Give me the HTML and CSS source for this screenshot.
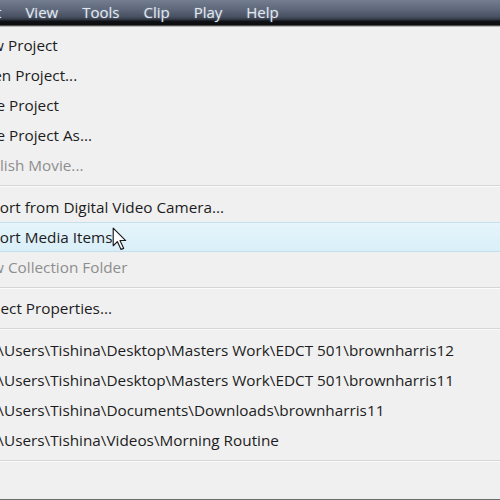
FILE: index.html
```html
<!DOCTYPE html>
<html>
<head>
<meta charset="utf-8">
<link rel="stylesheet" href="styles.css">
</head>
<body>
<div class="screen">
  <div class="menubar">
    <div class="menubar-items">
      <span class="mb-item">File</span>
      <span class="mb-item">Edit</span>
      <span class="mb-item">View</span>
      <span class="mb-item">Tools</span>
      <span class="mb-item">Clip</span>
      <span class="mb-item">Play</span>
      <span class="mb-item">Help</span>
    </div>
  </div>
  <div class="menu">
    <div class="menu-list">
      <div class="item"><span class="label">New Project</span></div>
      <div class="item"><span class="label">Open Project...</span></div>
      <div class="item"><span class="label">Save Project</span></div>
      <div class="item"><span class="label">Save Project As...</span></div>
      <div class="item disabled"><span class="label">Publish Movie...</span></div>
      <div class="sep"></div>
      <div class="item"><span class="label">Import from Digital Video Camera...</span></div>
      <div class="item hover"><span class="label">Import Media Items</span></div>
      <div class="item disabled"><span class="label">New Collection Folder</span></div>
      <div class="sep sep-narrow"></div>
      <div class="item"><span class="label">Project Properties...</span></div>
      <div class="sep"></div>
      <div class="item"><span class="label">1 C:\Users\Tishina\Desktop\Masters Work\EDCT 501\brownharris12</span></div>
      <div class="item"><span class="label">2 C:\Users\Tishina\Desktop\Masters Work\EDCT 501\brownharris11</span></div>
      <div class="item"><span class="label">3 C:\Users\Tishina\Documents\Downloads\brownharris11</span></div>
      <div class="item"><span class="label">4 C:\Users\Tishina\Videos\Morning Routine</span></div>
      <div class="sep"></div>
      <div class="item"><span class="label">Exit</span></div>
    </div>
    <svg class="cursor" width="17" height="25" viewBox="0 0 16 24">
      <path d="M1 1 L1 18 L5 14 L8.5 21.5 L11 20.5 L7.5 13 L13 13 Z" fill="#ffffff" stroke="#1a1a1a" stroke-width="1.1" stroke-linejoin="round"/>
    </svg>
  </div>
</div>
</body>
</html>
```
FILE: styles.css
```css
html, body {
  margin: 0;
  padding: 0;
  background: #f0f0f0;
}
.screen {
  width: 500px;
  height: 500px;
  overflow: hidden;
  display: flex;
  flex-direction: column;
  font-family: "Open Sans", "Noto Sans", sans-serif;
}
.menubar {
  height: 27px;
  flex: none;
  background: linear-gradient(to bottom, #737e90 0px, #5f697b 9px, #475061 17px, #2c323c 20px, #111215 21px, #0b0c0e 25px, #8c8c8c 26px, #e4e4e4 27px);
  overflow: hidden;
}
.menubar-items {
  display: flex;
  margin-left: -85px;
  height: 23px;
  align-items: center;
}
.mb-item {
  padding: 0 12px;
  font-size: 15px;
  color: #e3e8ef;
  white-space: nowrap;
  text-shadow: 0 0 2px rgba(180, 200, 230, 0.5);
}
.menu {
  position: relative;
  flex: 1;
  background: #f0f0f0;
  padding-top: 3px;
  border-bottom: 1px solid #6c6c6c;
  overflow: hidden;
}
.menu-list {
  display: flex;
  flex-direction: column;
  margin-left: -28px;
}
.item {
  height: 30px;
  display: flex;
  align-items: center;
  font-size: 15.3px;
  color: #1c1c22;
  white-space: nowrap;
  box-sizing: border-box;
}
.item.disabled {
  color: #8e8e8e;
}
.item.hover {
  background: linear-gradient(to bottom, #e6f4fb, #d9eff8);
  border-top: 1px solid #c4e0ef;
  border-bottom: 1px solid #c4e0ef;
  margin-right: -40px;
}
.sep {
  height: 12px;
  display: flex;
  flex-direction: column;
  justify-content: center;
}
.sep.sep-narrow {
  height: 11px;
}
.sep::before {
  content: "";
  display: block;
  height: 1px;
  background: #d6d6d6;
}
.sep::after {
  content: "";
  display: block;
  height: 1px;
  background: #fbfbfb;
}
.cursor {
  position: absolute;
  left: 112px;
  top: 200px;
}
```
